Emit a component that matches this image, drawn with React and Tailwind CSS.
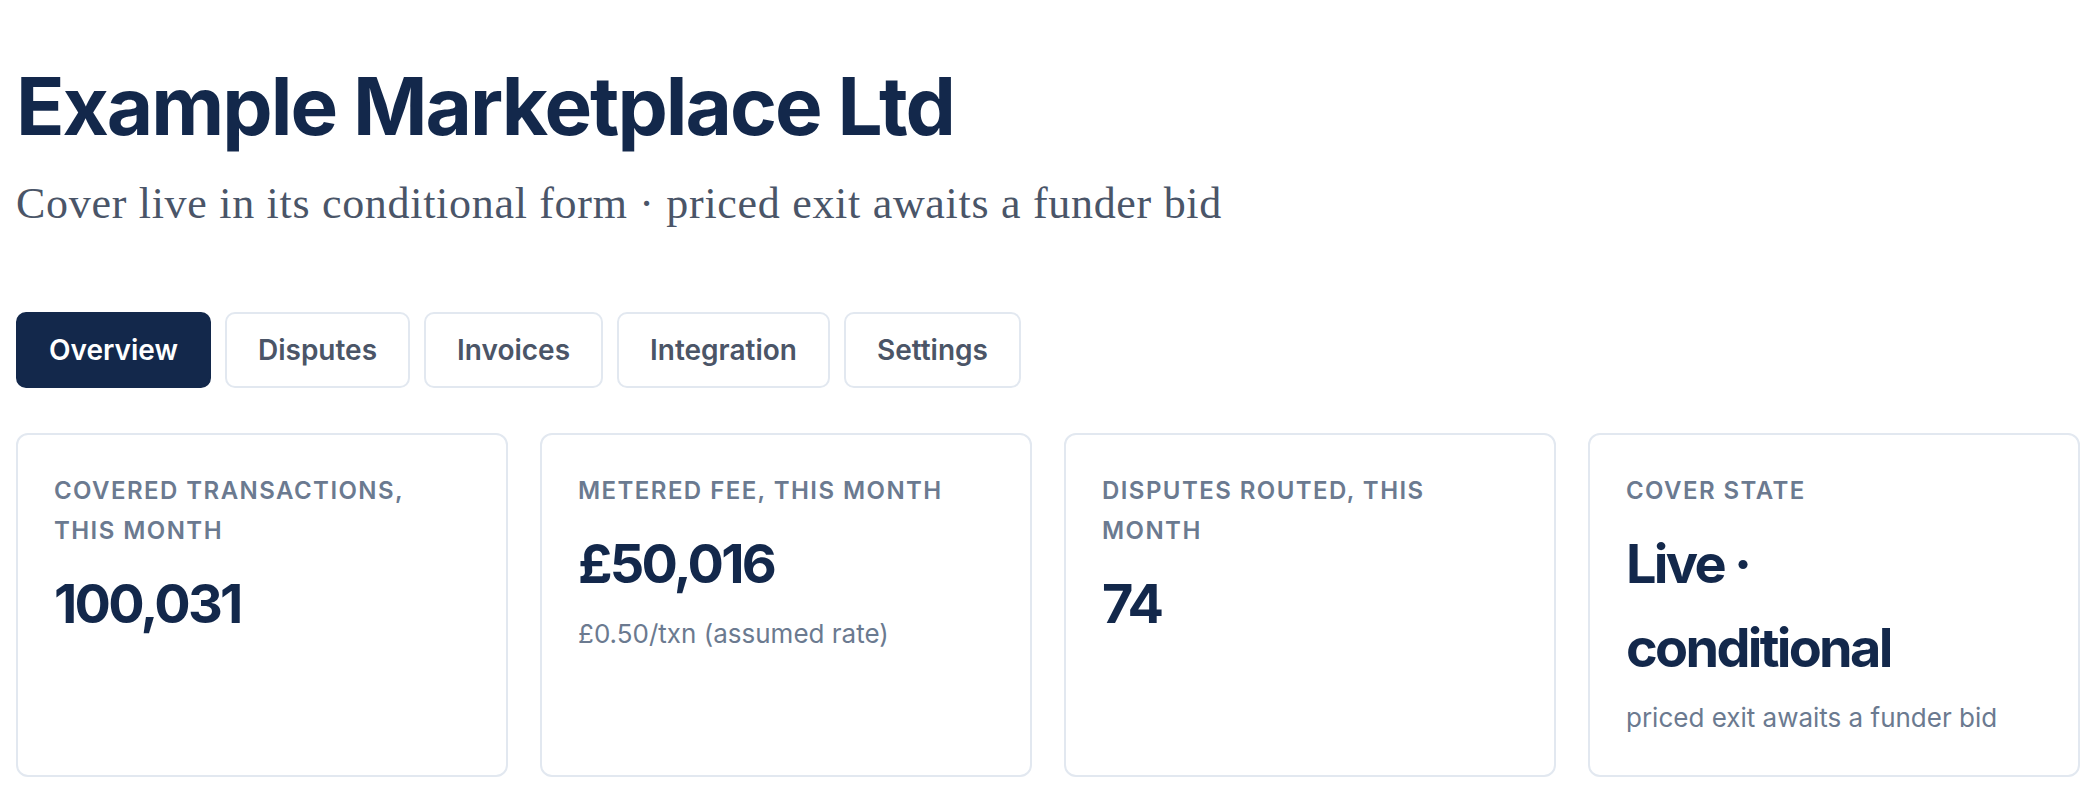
import React from 'react';

const tabs = ['Overview', 'Disputes', 'Invoices', 'Integration', 'Settings'];

const stats = [
    { label: 'Covered transactions, this month', value: '100,031' },
    { label: 'Metered fee, this month', value: '£50,016', sub: '£0.50/txn (assumed rate)' },
    { label: 'Disputes routed, this month', value: '74' },
    { label: 'Cover state', value: 'Live · conditional', sub: 'priced exit awaits a funder bid' },
];

const App = () => {
    return (
        <div className="min-h-screen bg-white px-4 pt-16 font-['Inter',sans-serif] text-[#13284b]">
            <h1 className="text-[80px] leading-[84px] font-bold tracking-tight">Example Marketplace Ltd</h1>
            <p className="mt-[28px] font-['Liberation_Serif',serif] text-[44px] leading-[56px] tracking-[0.7px] text-[#4a5568]">
                Cover live in its conditional form · priced exit awaits a funder bid
            </p>

            <div className="mt-20 flex gap-3.5">
                {tabs.map((tab, i) => (
                    <button
                        key={tab}
                        className={
                            i === 0
                                ? 'rounded-[10px] border-2 border-[#13284b] bg-[#13284b] px-[31px] py-4 text-[28px] leading-[40px] font-semibold text-white'
                                : 'rounded-[10px] border-2 border-[#e2e8f0] bg-white px-[31px] py-4 text-[28px] leading-[40px] font-semibold text-[#4b5567]'
                        }
                    >
                        {tab}
                    </button>
                ))}
            </div>

            <div className="mt-[45px] grid grid-cols-4 gap-8">
                {stats.map((s) => (
                    <div key={s.label} className="rounded-xl border-2 border-[#e2e8f0] px-9 pt-9 pb-[37px]">
                        <div className="max-w-[390px] text-[24px] leading-[40px] font-semibold uppercase tracking-[0.06em] text-[#6b7a90]">
                            {s.label}
                        </div>
                        <div className="mt-[11px] max-w-[340px] text-[54px] leading-[84px] font-bold tracking-[-0.05em]">{s.value}</div>
                        {s.sub && (
                            <div className="mt-2 text-[26px] leading-[40px] text-[#6b7a90]">{s.sub}</div>
                        )}
                    </div>
                ))}
            </div>
        </div>
    );
};

export default App;
